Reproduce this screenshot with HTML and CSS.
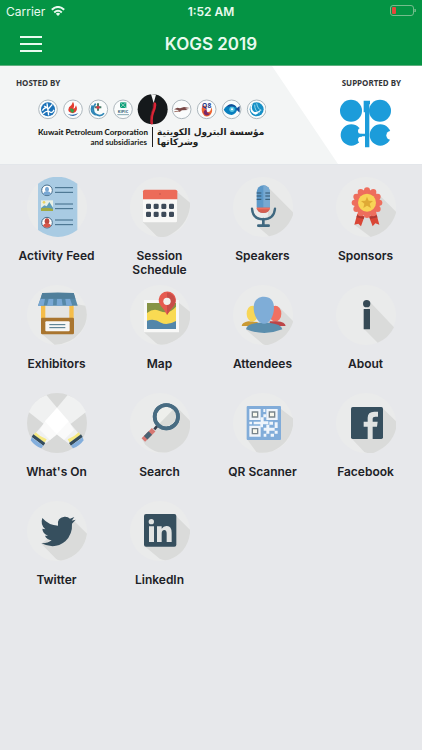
FILE: index.html
```html
<!DOCTYPE html>
<html lang="en">
<head>
<meta charset="utf-8">
<meta name="viewport" content="width=device-width, initial-scale=1">
<title>KOGS 2019</title>
<link rel="stylesheet" href="styles.css">
</head>
<body>
<header class="app-header">
  <div class="status-bar">
    <div class="carrier">
      <span>Carrier</span>
      <svg class="wifi" viewBox="0 0 14 10" aria-hidden="true"><g fill="none" stroke="currentColor" stroke-width="2"><path d="M.8 3.7Q7-1.8 13.2 3.7"/><path d="M3.2 6.4Q7 3 10.8 6.4"/></g><path d="M4.8 7.7Q7 6 9.2 7.7L7 10z" fill="currentColor"/></svg>
    </div>
    <time class="clock">1:52 AM</time>
    <svg class="battery" viewBox="0 0 26 12" aria-hidden="true"><rect x=".5" y=".5" width="23" height="10" rx="2.5" fill="none" stroke="#74bd8c"/><path d="M25 4q1 1.500 0 3z" stroke="#74bd8c" fill="#74bd8c"/><rect x="2" y="2" width="4" height="7" rx="1" fill="#e5483b"/></svg>
  </div>
  <div class="title-bar">
    <button class="menu-button" type="button" aria-label="Menu"><svg viewBox="0 0 22 16" aria-hidden="true"><path d="M0 1h22M0 8h22M0 15h22" stroke="currentColor" stroke-width="2"/></svg></button>
    <h1>KOGS 2019</h1>
  </div>
</header>

<section class="banner">
  <div class="hosted">
    <h2>HOSTED BY</h2>
    <div class="host-logo">
      <svg class="host-marks" viewBox="114 84 684 93" aria-hidden="true">
        <g fill="#fafcfc" stroke="#aeb8be" stroke-width="3"><circle cx="144" cy="130" r="28"/><circle cx="219" cy="130" r="28"/><circle cx="295" cy="130" r="28"/><circle cx="369" cy="130" r="28"/><circle cx="545" cy="130" r="28"/><circle cx="620" cy="130" r="28"/><circle cx="695" cy="130" r="28"/><circle cx="770" cy="130" r="28"/></g>
        <circle cx="144" cy="130" r="21" fill="#1c72b8"/><path d="M127 134q10-15 18-5l12-14M129 143q13-12 21-5 7 5 12-7M141 112l5 36M132 120l8 4" fill="none" stroke="#fff" stroke-width="4"/>
        <path d="M219 107q-4 13-12 17-7 16 12 18 18-6 9-24-2 9-8 10 5-10-1-21z" fill="#e43d31"/><path d="M212 126q-5 11 7 15l4-9z" fill="#33a34a"/><path d="M202 143q17 7 33-2-13 17-33 2z" fill="#2361a7"/>
        <path d="M287 113q-15 17 0 32 15 9 25-3M277 118q-8 21 10 29" fill="none" stroke="#2e86b6" stroke-width="5"/><path d="M294 112v22M284 124h20" stroke="#497c68" stroke-width="6"/><circle cx="294" cy="124" r="5" fill="#d63c46"/>
        <path d="M360 109h19v17h-19z" fill="#0ba27b"/><path d="M360 109l19 17M360 126l9-9 10-8" stroke="#bfe5d4" stroke-width="2"/><text x="369" y="142" text-anchor="middle" class="kipic">KIPIC</text><path d="M352 146h35" stroke="#447b8c" stroke-width="2"/>
        <circle cx="458" cy="130" r="45" fill="#15191b"/><path d="M453 84l8 27 7-25z" fill="#f5f6f6"/><path d="M461 110q8-4 8 7-1 13-7 25-5 12-3 31-8 6-8-4-1-17 4-30 6-15 6-29z" fill="#db2435"/><path d="M459 113q3 13-4 25-5 18-2 34" fill="none" stroke="#801a29" stroke-width="2"/>
        <path d="M522 130l10-5 8 2 12-4 17 3-13 2 8 4-18 1-8 5-4-6z" fill="#784947"/><path d="M523 137l18-2" stroke="#a57970" stroke-width="3"/>
        <path d="M607 119h12v7q-5 11 4 12 10 1 11-14 7 12-4 24-14 9-21-4-7-10-2-25z" fill="#ed6530"/><path d="M620 129q-1 15 11 13-9 12-18 3-7-9 7-16z" fill="#7a286b"/><text x="620" y="125" text-anchor="middle" class="q8">Q8</text>
        <path d="M671 131q8-14 24-16 14 2 17 15-3 14-17 17-16-2-24-16z" fill="#087fbe"/><path d="M707 129l12-9v20z" fill="#194b93"/><path d="M679 122q16-15 31 2-15-5-31-2z" fill="#194b93"/><circle cx="696" cy="130" r="8" fill="#54c3e1"/><circle cx="696" cy="130" r="3" fill="#fff"/>
        <circle cx="770" cy="130" r="21" fill="#168fc6"/><path d="M759 112q-8 18 3 25 10 3 22-7-6 13-17 16-16-4-16-19 0-9 8-15z" fill="#fff"/><path d="M770 112q3 17 14 21M764 116q0 20 15 25" fill="none" stroke="#8fd5ec" stroke-width="3"/>
      </svg>
      <div class="host-names">
        <p class="host-en"><strong>Kuwait Petroleum Corporation</strong><span>and subsidiaries</span></p>
        <p class="host-ar" lang="ar" dir="rtl"><strong>مؤسسة البترول الكويتية</strong><span>وشركاتها</span></p>
      </div>
    </div>
  </div>
  <div class="supported">
    <h2>SUPPORTED BY</h2>
    <svg class="opec" viewBox="204 100 153 147" role="img" aria-label="OPEC"><g fill="#1c9cda"><circle cx="237" cy="135" r="33"/><circle cx="324" cy="135" r="33"/><circle cx="238" cy="208" r="32"/><circle cx="325" cy="208" r="32"/></g><g fill="#fff"><circle cx="267" cy="196" r="9"/><circle cx="267" cy="222" r="9"/><circle cx="356" cy="209" r="13"/></g><path d="M275 105h19v11h-2v129h-13v-33h-18v-8h18v-64h-4z" fill="#1c9cda"/></svg>
  </div>
</section>

<main>
<nav aria-label="Event menu">
<ul class="menu">
  <li><a href="#activity">
    <svg viewBox="78 27 180 180" aria-hidden="true"><circle class="disc" cx="168" cy="117" r="90"/><path d="M111 47q57-42 118 0v139q-57 42-118 0z" fill="#a9cbe3"/><path d="M162 59h54M162 73h54M162 108h54M162 122h54M162 156h54M162 170h54" stroke="#3d6985" stroke-width="3"/><circle cx="138" cy="67" r="16" fill="#fff" stroke="#476e8b" stroke-width="3"/><ellipse cx="138" cy="64" rx="6" ry="8" fill="#78a7d3"/><path d="M126 77q3-7 12-7t12 7q-12 9-24 0z" fill="#78a7d3"/><path d="M120 97h36v32h-36z" fill="#e8f0e6"/><circle cx="129" cy="103" r="4" fill="#ecd462"/><path d="M120 120l10-8 7 3 8-13 11 17v10h-36z" fill="#5f9db9"/><path d="M120 121q18-4 36 2v6h-36z" fill="#a1aa43"/><circle cx="138" cy="164" r="16" fill="#fff" stroke="#476e8b" stroke-width="3"/><ellipse cx="138" cy="160" rx="7" ry="9" fill="#bc493f"/><path d="M126 174q2-8 12-8t12 8q-12 10-24 0z" fill="#d65649"/></svg>
    <span>Activity Feed</span></a></li>
  <li><a href="#schedule">
    <svg viewBox="387 27 180 180" aria-hidden="true"><circle class="disc" cx="477" cy="117" r="90"/><path class="shade" d="M528 71l40 34q-3 68-69 100-20 5-32-1l-41-41z"/><rect x="426" y="66" width="102" height="97" rx="4" fill="#f8f8f7"/><path d="M426 94V70q0-5 5-5h92q6 0 6 5v24z" fill="#ec6b59"/><circle cx="477" cy="78" r="2" fill="#b64b43"/><g fill="#3d4a59"><rect x="435" y="107" width="15" height="16" rx="4"/><rect x="458" y="107" width="15" height="16" rx="4"/><rect x="481" y="107" width="15" height="16" rx="4"/><rect x="504" y="107" width="15" height="16" rx="4"/><rect x="435" y="131" width="15" height="16" rx="4"/><rect x="458" y="131" width="15" height="16" rx="4"/><rect x="481" y="131" width="15" height="16" rx="4"/><rect x="504" y="131" width="15" height="16" rx="4"/></g></svg>
    <span>Session Schedule</span></a></li>
  <li><a href="#speakers">
    <svg viewBox="63 27 180 180" aria-hidden="true"><circle class="disc" cx="153" cy="117" r="90"/><path class="shade" d="M173 62l72 73q-19 58-74 70l-33-29 29-27z"/><path d="M120 122q2 32 34 32t35-32" fill="none" stroke="#3f6880" stroke-width="7" stroke-linecap="round"/><path d="M154 153v20M139 173h31" stroke="#3f6880" stroke-width="8" stroke-linecap="round"/><rect x="134" y="52" width="40" height="83" rx="20" fill="#5c98c8"/><path d="M154 52a20 20 0 0 1 20 20v47h-20z" fill="#78a9d1"/><path d="M134 119h40Q172 135 154 135Q136 135 134 119z" fill="#d55d50"/><path d="M134 119h40v5h-40z" fill="#f0705f"/><path d="M134 75h14M134 84h14M134 94h14M160 75h14M160 84h14M160 94h14" stroke="#31536b" stroke-width="3"/></svg>
    <span>Speakers</span></a></li>
  <li><a href="#sponsors">
    <svg viewBox="372 27 180 180" aria-hidden="true"><circle class="disc" cx="462" cy="117" r="90"/><path class="shade" d="M500 79l53 53q-18 61-77 75l-49-37 38-32z"/><path d="M436 137l22 7-11 31-8-8-12 3zM493 137l-23 7 12 31 8-9 12 4z" fill="#d94636"/><path d="M436 141l21 6-2 6-22-5zM493 141l-20 6 2 6 22-5z" fill="#ad3b35"/><g fill="#ee6e5d"><circle cx="465" cy="104" r="39"/><circle cx="465" cy="67" r="9"/><circle cx="484" cy="72" r="9"/><circle cx="497" cy="86" r="9"/><circle cx="502" cy="104" r="9"/><circle cx="497" cy="123" r="9"/><circle cx="484" cy="136" r="9"/><circle cx="465" cy="141" r="9"/><circle cx="446" cy="136" r="9"/><circle cx="433" cy="123" r="9"/><circle cx="428" cy="104" r="9"/><circle cx="433" cy="86" r="9"/><circle cx="446" cy="72" r="9"/></g><circle cx="465" cy="104" r="27" fill="#f8d456"/><path d="M465 86l5 12 13 1-10 8 4 13-12-7-11 7 3-13-10-8 13-1z" fill="#dfaa35"/></svg>
    <span>Sponsors</span></a></li>

  <li><a href="#exhibitors">
    <svg viewBox="78 15 180 180" aria-hidden="true"><circle class="disc" cx="168" cy="105" r="90"/><path class="shade" d="M229 73l24 4q14 43-15 80-29 36-77 37l-41-34z"/><path d="M133 76h72v38h-72z" fill="#e5e5e3"/><path d="M120 74h13v42h-13zM205 74h13v42h-13z" fill="#f5bd49"/><rect x="120" y="113" width="99" height="50" rx="4" fill="#a9752f"/><rect x="133" y="124" width="73" height="30" rx="3" fill="#f7f7f5"/><path d="M145 134h48M145 143h48" stroke="#477185" stroke-width="3"/><path d="M124 39h94l12 38H111z" fill="#5588a8"/><path d="M119 56h13l-4 21h-17zM143 56h14l-1 21h-18zM168 56h14l3 21h-18zM193 56h14l7 21h-18z" fill="#79a8d4"/><path d="M124 39q46-3 94 0l5 17H119z" fill="#507f9b"/></svg>
    <span>Exhibitors</span></a></li>
  <li><a href="#map">
    <svg viewBox="387 15 180 180" aria-hidden="true"><circle class="disc" cx="477" cy="105" r="90"/><path class="shade" d="M531 66l37 30q3 72-70 96-26 5-33-3l-36-32z"/><path d="M429 60h105v97H429z" fill="#f8f8f7"/><path d="M438 69h87v78h-87z" fill="#869345"/><path d="M438 99q21-17 40-5 27 9 47-14v67h-87z" fill="#f9da52"/><path d="M438 122q22-8 42 6 18 10 45-5v24h-87z" fill="#5286aa"/><path d="M498 105q-8-16-20-29a26 26 0 1 1 42 0q-12 13-22 29z" fill="#e65b50"/><path d="M498 38a26 26 0 0 1 22 38q-12 13-22 29z" fill="#c84e49"/><circle cx="498" cy="64" r="11" fill="#f1f2ee"/></svg>
    <span>Map</span></a></li>
  <li><a href="#attendees">
    <svg viewBox="63 15 180 180" aria-hidden="true"><circle class="disc" cx="153" cy="105" r="90"/><path class="shade" d="M202 82l42 42q-17 55-76 71-12 2-20-7l-45-38z"/><ellipse cx="121" cy="101" rx="17" ry="24" fill="#f7d657"/><path d="M89 138q1-11 20-14l28 2v12z" fill="#c99a35"/><ellipse cx="190" cy="101" rx="18" ry="24" fill="#f07061"/><path d="M173 124h22q25 2 26 14h-48z" fill="#bc4548"/><path d="M102 148q2-17 40-20h28q39 4 41 20-54 22-109 0z" fill="#5b8ead"/><path d="M125 83C125 61 138 50 156 50S186 61 186 83C186 108 172 131 156 131S125 108 125 83z" fill="#7fadd7"/></svg>
    <span>Attendees</span></a></li>
  <li><a href="#about">
    <svg viewBox="372 15 180 180" aria-hidden="true"><circle class="disc" cx="462" cy="105" r="90"/><path class="shade" d="M472 64l74 78q-17 34-49 46l-41-41 12-72z"/><circle cx="464" cy="71" r="11" fill="#354955"/><rect x="455" y="87" width="19" height="61" rx="1" fill="#354955"/></svg>
    <span>About</span></a></li>

  <li><a href="#whats-on">
    <svg viewBox="78 24 180 180" aria-hidden="true"><circle cx="168" cy="114" r="90" fill="#d8d9d8"/><path d="M136 30L245 160l-34 22L83 81q16-37 53-51z" fill="#f0f1f1"/><path d="M200 30L91 160l34 22L255 81q-16-37-55-51z" fill="#f0f1f1"/><path d="M168 68l35 41-36 39-35-39z" fill="#fff"/><path d="M136 103l31 45-20 17-31-31zM199 103l-32 45 22 17 30-31z" fill="#fff" opacity=".65"/><path d="M104 142q13 14 33 21l-6 10-34-22z" fill="#f6e982"/><path d="M97 148l36 26-6 8-35-26z" fill="#344c5d"/><path d="M92 157l35 25-6 8q-20-7-32-24z" fill="#83aedc"/><path d="M233 142q-13 14-33 21l6 10 34-22z" fill="#f6e982"/><path d="M240 148l-36 26 6 8 35-26z" fill="#344c5d"/><path d="M245 157l-35 25 6 8q20-7 32-24z" fill="#83aedc"/></svg>
    <span>What's On</span></a></li>
  <li><a href="#search">
    <svg viewBox="387 24 180 180" aria-hidden="true"><circle class="disc" cx="477" cy="114" r="90"/><path class="shade" d="M527 66l41 42q2 69-65 93-38 8-70-22l-9-15z"/><path d="M472 119l-12 14" stroke="#373d4c" stroke-width="8"/><path d="M458 134l-31 31" stroke="#d77772" stroke-width="15"/><path d="M448 144l-14 14" stroke="#4a6273" stroke-width="15"/><circle cx="496" cy="95" r="35" fill="#eeefec" stroke="#486c82" stroke-width="11"/><path d="M520 70a35 35 0 0 1-48 49z" fill="#d9dbd8"/><circle cx="496" cy="95" r="35" fill="none" stroke="#486c82" stroke-width="11"/></svg>
    <span>Search</span></a></li>
  <li><a href="#qr">
    <svg viewBox="63 24 180 180" aria-hidden="true"><circle class="disc" cx="153" cy="114" r="90"/><path class="shade" d="M207 72l38 29q-1 69-64 98-30 8-48 2l-28-38z"/><rect x="104" y="63" width="103" height="102" rx="3" fill="#81acd9"/><g fill="#f0f5fb"><path d="M112 72h34v33h-34zM163 72h34v33h-34zM112 122h34v33h-34z"/><path d="M154 72h6v9h-6zM154 88h9v9h-9zM146 97h9v12h14v9h-16v9h-8v-9h-20v-8h21zM112 110h8v8h-8zM172 110h11v9h-11zM188 112h9v17h-9zM163 119h9v9h9v9h-9v9h-9v-9h-8v-9h8zM180 128h8v9h9v9h-9v-9h-8zM155 146h8v9h-8zM176 146h10v9h-10z"/></g><g fill="#f9f8ed" stroke="#79858c" stroke-width="4"><path d="M121 81h16v15h-16zM172 81h16v15h-16zM121 131h16v15h-16z"/></g></svg>
    <span>QR Scanner</span></a></li>
  <li><a href="#facebook">
    <svg viewBox="372 24 180 180" aria-hidden="true"><circle class="disc" cx="462" cy="114" r="90"/><path class="shade" d="M512 70l43 42q-5 65-69 91-17 4-29-2l-39-41z"/><rect x="417" y="66" width="96" height="96" rx="5" fill="#364f5e"/><path d="M467 162v-37h-12v-15h12V98q0-18 20-18h11v15h-8q-8 0-8 7v8h15l-2 15h-13v37z" fill="#e0e3e2"/></svg>
    <span>Facebook</span></a></li>

  <li><a href="#twitter">
    <svg viewBox="78 33 180 180" aria-hidden="true"><circle class="disc" cx="168" cy="123" r="90"/><path class="shade" d="M214 88l44 43q-10 62-73 80-14 2-20-5l-44-45z"/><path d="M124 84q19 22 47 23-4-24 19-27 11-1 17 6l13-5-8 11 12-3-11 12q2 31-20 53-31 26-72 6 19 1 31-9-16-3-20-14h9q-16-6-17-21l9 2q-16-14-9-34z" fill="#364f5e"/></svg>
    <span>Twitter</span></a></li>
  <li><a href="#linkedin">
    <svg viewBox="387 33 180 180" aria-hidden="true"><circle class="disc" cx="477" cy="123" r="90"/><path class="shade" d="M523 76l45 44q-5 68-65 89-14 4-27-3l-45-37z"/><rect x="429" y="72" width="97" height="98" rx="6" fill="#364f5e"/><circle cx="451" cy="95" r="8" fill="#e2e4e3"/><path d="M444 109h15v47h-15zM468 109h14v7q6-9 16-8 14 1 14 20v28h-15v-25q0-11-7-11-8 0-8 11v25h-14z" fill="#e2e4e3"/></svg>
    <span>LinkedIn</span></a></li>
</ul>
</nav>
</main>
</body>
</html>
```
FILE: styles.css
```css
* {
  box-sizing: border-box;
}

body {
  margin: 0;
  min-height: 100vh;
  background: #e7e8eb;
  color: #202126;
  font-family: Inter, "Liberation Sans", sans-serif;
}

h1, h2, p, ul {
  margin: 0;
  padding: 0;
}

svg {
  display: block;
}

.app-header {
  background: #049444;
  color: #e9faef;
  border-bottom: 1px solid #5eaf7f;
}

.status-bar {
  display: grid;
  grid-template-columns: 1fr auto 1fr;
  align-items: center;
  height: 22px;
  padding: 0 6px;
  font-size: 12px;
}

.carrier {
  display: flex;
  align-items: center;
  gap: 6px;
}

.wifi {
  width: 14px;
  height: 10px;
}

.clock {
  font-weight: 600;
}

.battery {
  width: 26px;
  height: 12px;
  justify-self: end;
}

.title-bar {
  display: grid;
  grid-template-columns: 1fr auto 1fr;
  align-items: center;
  height: 43px;
  padding: 0 20px;
}

.title-bar h1 {
  font-size: 17px;
  font-weight: 600;
}

.menu-button {
  justify-self: start;
  padding: 0;
  border: 0;
  background: none;
  color: inherit;
}

.menu-button svg {
  width: 22px;
  height: 16px;
}

.banner {
  display: flex;
  justify-content: space-between;
  background: #f3f5f5;
  border-bottom: 1px solid #e3e6ea;
}

.banner h2 {
  color: #333538;
  font-family: "Noto Sans", sans-serif;
  font-size: 8px;
  font-weight: 700;
  line-height: 10px;
}

.hosted {
  padding: 12px 0 16px 16px;
}

.host-logo {
  margin: 6px 0 0 22px;
}

.host-marks {
  width: 228px;
  height: 31px;
}

.kipic {
  font: 700 12px "Open Sans", sans-serif;
  fill: #315e74;
}

.q8 {
  font: 700 20px "Open Sans", sans-serif;
  fill: #27418c;
}

.host-names {
  display: flex;
  margin-top: 2px;
  color: #1d1e20;
  font-family: Lato, sans-serif;
  font-size: 8px;
  line-height: 10px;
  white-space: nowrap;
}

.host-names strong,
.host-names span {
  display: block;
}

.host-names strong {
  font-weight: 900;
}

.host-en {
  width: 115px;
  padding-right: 5px;
  border-right: 1px solid #1d1e20;
  text-align: right;
}

.host-en span {
  font-weight: 700;
}

.host-ar {
  padding-left: 4px;
  font-family: "DejaVu Sans", sans-serif;
  font-size: 9px;
  font-weight: 700;
  text-align: left;
}

.supported {
  display: flex;
  flex-direction: column;
  align-items: flex-end;
  gap: 11px;
  width: 150px;
  padding: 12px 21px 16px 0;
  background: #fff;
  clip-path: polygon(0 0, 100% 0, 100% 100%, 44% 100%);
}

.opec {
  width: 51px;
  height: 49px;
  margin-right: 10px;
}

.menu {
  display: grid;
  grid-template-columns: repeat(4, 1fr);
  grid-auto-rows: minmax(100px, auto);
  row-gap: 8px;
  padding: 12px 5px;
  list-style: none;
}

.menu a {
  display: flex;
  flex-direction: column;
  align-items: center;
  gap: 12px;
  padding: 0 8px;
  color: inherit;
  font-size: 12px;
  font-weight: 600;
  line-height: 14px;
  text-align: center;
  text-decoration: none;
}

.menu svg {
  width: 60px;
  height: 60px;
}

.disc {
  fill: #eaebeb;
}

.shade {
  fill: #dadbda;
}
```
